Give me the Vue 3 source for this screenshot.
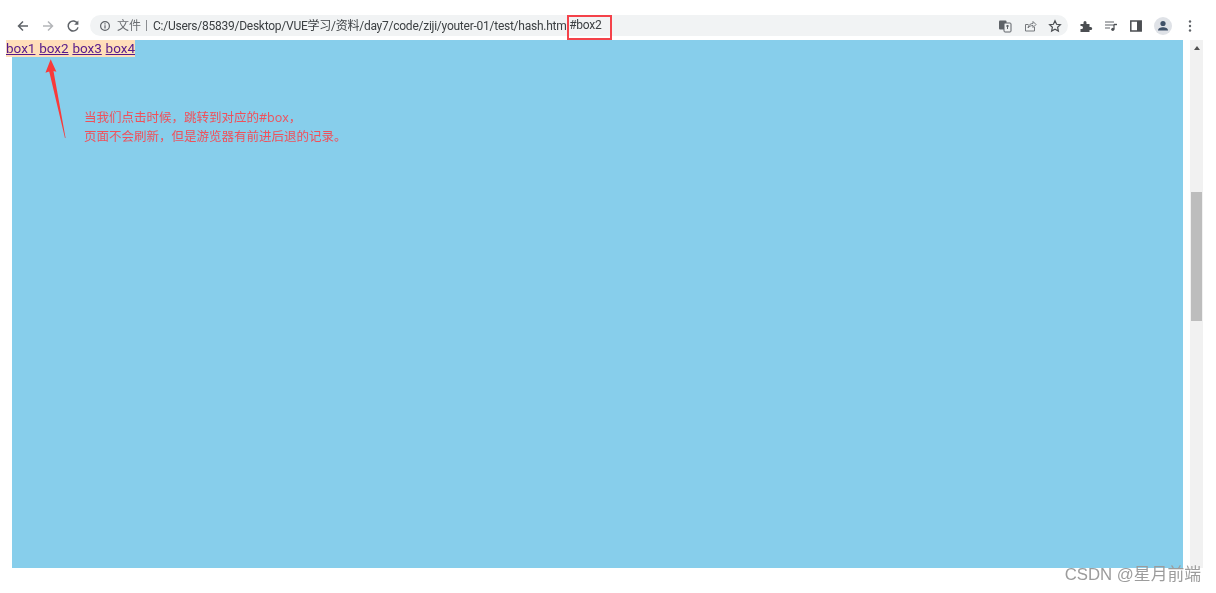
<script setup>
const links = ['box1', 'box2', 'box3', 'box4']
</script>

<template>
  <div class="shot">
    <header class="toolbar">
      <div class="navs">
        <svg class="ic" viewBox="0 0 16 16"><path d="M13 8H4M8 3.500 3.500 8 8 12.500" fill="none" stroke="#5f6368" stroke-width="1.500"/></svg>
        <svg class="ic" viewBox="0 0 16 16"><path d="M3 8h9M8 3.500 12.500 8 8 12.500" fill="none" stroke="#b4b6b9" stroke-width="1.500"/></svg>
        <svg class="ic" viewBox="0 0 16 16"><path d="M12.600 5.600A5 5 0 1 0 13 9.400" fill="none" stroke="#5f6368" stroke-width="1.500"/><path d="M13.400 2.600v4.200H9.200z" fill="#5f6368"/></svg>
      </div>
      <div class="omnibox">
        <svg class="info" viewBox="0 0 12 12"><circle cx="6" cy="6" r="4.400" fill="none" stroke="#5f6368" stroke-width="1.200"/><path d="M6 5.300v3.200M6 3.300v1.200" stroke="#5f6368" stroke-width="1.200"/></svg>
        <span class="scheme">文件</span>
        <span class="bar"></span>
        <span class="url">C:/Users/85839/Desktop/VUE学习/资料/day7/code/ziji/youter-01/test/hash.html</span><span class="url">#box2</span>
        <span class="spacer"></span>
        <svg class="ic small" viewBox="0 0 14 14"><rect x="1" y="1.500" width="7.500" height="9" rx="1" fill="#5f6368"/><rect x="6" y="4" width="7" height="9" rx="1" fill="#f1f3f4" stroke="#5f6368"/><path d="M8 7h3M9.500 6v4" stroke="#5f6368"/></svg>
        <svg class="ic small" viewBox="0 0 14 14"><path d="M11.500 8v4h-9V5.500h3" fill="none" stroke="#75787c"/><path d="M5 9c.3-3 2.500-4.500 5-4.500V2.500l3 3-3 3V6.500C8 6.500 6.300 7.300 5 9z" fill="none" stroke="#75787c"/></svg>
        <svg class="ic small" viewBox="0 0 14 14"><path d="m7 1.800 1.600 3.500 3.800.4-2.800 2.600.8 3.800L7 10.200l-3.400 1.900.8-3.800-2.800-2.600 3.800-.4z" fill="none" stroke="#4b4e52" stroke-width="1.200"/></svg>
      </div>
      <div class="tools">
        <svg class="ic small" viewBox="0 0 14 14"><path d="M1.500 5h3V3.500a1.500 1.500 0 0 1 3 0V5h3v3h1.200a1.500 1.500 0 0 1 0 3H10.500v2h-9v-3h1a1.500 1.500 0 0 0 0-3h-1z" fill="#4b4e52"/></svg>
        <svg class="ic small" viewBox="0 0 14 14"><path d="M1 3h9M1 6h9M1 9h5" stroke="#5f6368" stroke-width="1.200"/><path d="M10 5.500V10" stroke="#4b4e52" stroke-width="1.200"/><path d="M10 5.500h3" stroke="#4b4e52" stroke-width="1.400"/><circle cx="8.800" cy="10.300" r="1.600" fill="#4b4e52"/></svg>
        <svg class="ic small" viewBox="0 0 14 14"><rect x="1.800" y="2" width="10.400" height="10" fill="none" stroke="#4b4e52" stroke-width="1.500"/><rect x="8" y="2" width="4.200" height="10" fill="#4b4e52"/></svg>
        <span class="avatar"><svg viewBox="0 0 16 16"><circle cx="8" cy="5.500" r="2.600" fill="#3f5168"/><path d="M3 12.500c0-2.500 2.500-3.300 5-3.300s5 .8 5 3.300z" fill="#3f5168"/></svg></span>
        <svg class="ic small" viewBox="0 0 14 14"><circle cx="7" cy="2.500" r="1.200" fill="#5f6368"/><circle cx="7" cy="7" r="1.200" fill="#5f6368"/><circle cx="7" cy="11.500" r="1.200" fill="#5f6368"/></svg>
      </div>
    </header>

    <main class="viewport">
      <div class="box"></div>
      <aside class="scrollbar">
        <span class="arrow"></span>
        <span class="thumb"></span>
      </aside>

      <nav class="links">
        <a v-for="l in links" :key="l" href="#" @click.prevent>{{ l }}</a>
      </nav>

      <svg class="pointer" viewBox="0 0 24 90"><path d="M6.500 0 13 14.500 9.700 13.500 23.500 90 22.800 90 4.800 14 0.500 15.500z" fill="#f93a3a"/></svg>

      <p class="note">当我们点击时候，跳转到对应的#box，<br>页面不会刷新，但是游览器有前进后退的记录。</p>
    </main>

    <footer class="footer">CSDN @星月前端</footer>

    <span class="hash-frame"></span>
  </div>
</template>

<style scoped>
.shot {
  position: relative;
  width: 1216px;
  height: 593px;
  overflow: hidden;
  background: #fff;
  font-family: "Open Sans", "Noto Sans CJK SC", sans-serif;
}
.toolbar {
  height: 40px;
  display: flex;
  align-items: flex-start;
  padding: 15px 0 0 15px;
  box-sizing: border-box;
}
.navs {
  display: flex;
  gap: 9px;
  width: 75px;
  height: 21px;
  align-items: center;
  flex: none;
}
.ic { width: 16px; height: 16px; flex: none; }
.ic.small { width: 14px; height: 14px; }
.omnibox {
  width: 978px;
  height: 21px;
  flex: none;
  display: flex;
  align-items: center;
  box-sizing: border-box;
  padding: 0 6px 0 9px;
  border-radius: 11px;
  background: #f1f3f4;
  font-family: Roboto, "Noto Sans CJK SC", sans-serif;
  font-size: 12px;
  white-space: nowrap;
  color: #3c4043;
  filter: blur(0.3px);
}
.info { width: 12px; height: 12px; flex: none; margin-right: 6px; }
.scheme { color: #6a6d71; margin-bottom: 2px; }
.bar { width: 1px; height: 11px; background: #8a8d91; margin: 0 6px 0 5px; }
.url { letter-spacing: -0.25px; margin-bottom: 2px; }
.spacer { flex: 1; }
.omnibox .ic.small { margin-left: 11px; }
.tools {
  display: flex;
  align-items: center;
  height: 21px;
  gap: 11px;
  margin-left: 11px;
  filter: blur(0.3px);
}
.avatar {
  width: 18px;
  height: 18px;
  border-radius: 50%;
  background: #dfe2e7;
  display: flex;
  align-items: center;
  justify-content: center;
}
.avatar svg { width: 16px; height: 16px; }
.viewport {
  position: relative;
  display: flex;
  height: 528px;
  padding-left: 12px;
}
.box {
  width: 1171px;
  background: #87ceeb;
  flex: none;
}
.scrollbar {
  width: 13px;
  margin-left: 7px;
  flex: none;
  background: #f1f1f1;
  display: flex;
  flex-direction: column;
  align-items: center;
  padding-top: 6px;
  box-sizing: border-box;
}
.arrow {
  width: 0;
  height: 0;
  border-left: 3px solid transparent;
  border-right: 3px solid transparent;
  border-bottom: 4px solid #505050;
}
.thumb {
  width: 11px;
  height: 129px;
  margin-top: 142px;
  background: #bdbdbd;
}
.links {
  position: absolute;
  left: 6px;
  top: 0;
  width: 129px;
  height: 17px;
  display: flex;
  justify-content: space-between;
  background: #ffdeb9;
  font-family: Roboto, "Liberation Sans", sans-serif;
  font-size: 13.500px;
  line-height: 17px;
  white-space: nowrap;
  filter: blur(0.3px);
}
.links a { color: #551a8b; text-decoration: underline; }
.pointer {
  position: absolute;
  left: 45px;
  top: 17px;
  width: 21px;
  height: 83px;
  filter: blur(0.3px);
}
.note {
  position: absolute;
  left: 84px;
  top: 69px;
  margin: 0;
  font-size: 12.500px;
  line-height: 18.500px;
  color: #f0505a;
  white-space: nowrap;
  filter: blur(0.3px);
}
.footer {
  text-align: right;
  padding-right: 15px;
  margin-top: -3px;
  font-family: "Liberation Sans", "Noto Sans CJK SC", sans-serif;
  font-size: 16.800px;
  line-height: 20px;
  color: #9c9c9c;
  position: relative;
  filter: blur(0.3px);
}
.hash-frame {
  position: absolute;
  left: 567px;
  top: 15px;
  width: 45px;
  height: 25px;
  box-sizing: border-box;
  border: 2px solid #f4424a;
}
</style>
